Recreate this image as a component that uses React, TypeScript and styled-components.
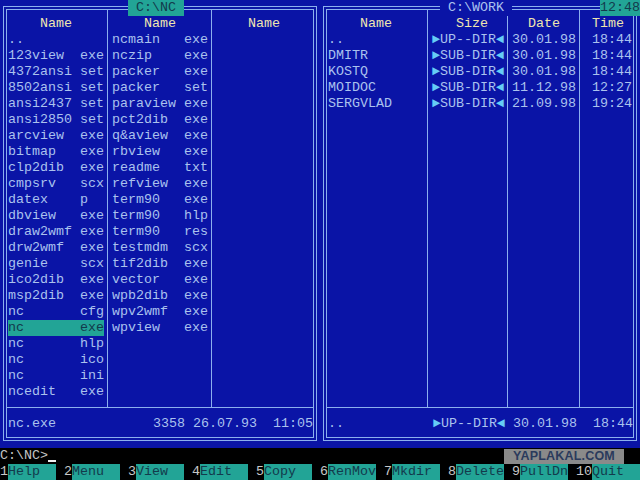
import React from 'react';
import styled, { createGlobalStyle } from 'styled-components';

const BLUE = '#0a14a6';
const LINE = '#8cb0ee';
const TEXT = '#abc2ee';
const HEAD = '#efe6b0';
const TEAL = '#22a496';
const DARK = '#133a4c';
const ARROW = '#66ccf6';

const GlobalStyle = createGlobalStyle`
  * { box-sizing: border-box; }
  html, body { margin: 0; padding: 0; background: #000; }
`;

const Screen = styled.div`
  position: relative;
  width: 640px;
  height: 480px;
  background: #000;
  font-family: 'Liberation Mono', 'Courier New', monospace;
  font-size: 13.33px;
  line-height: 16px;
  display: flex;
  flex-direction: column;
  overflow: hidden;
`;

const Panels = styled.div`
  display: flex;
  height: 448px;
`;

const PanelBox = styled.section`
  position: relative;
  width: 320px;
  height: 100%;
  padding: 6px 3px 7px;
  background: ${BLUE};
  color: ${TEXT};
`;

const Frame = styled.div`
  height: 100%;
  border: 1px solid ${LINE};
  padding: 2px;
`;

const Inner = styled.div`
  height: 100%;
  border: 1px solid ${LINE};
  display: flex;
  flex-direction: column;
`;

const Columns = styled.div<{ $cols: string }>`
  flex: 1;
  display: grid;
  grid-template-columns: ${p => p.$cols};
`;

const Column = styled.div<{ $pad: number; $last?: boolean }>`
  padding: 6px 0 0 ${p => p.$pad}px;
  border-right: ${p => (p.$last ? 'none' : `1px solid ${LINE}`)};
  white-space: pre;
  overflow: hidden;
`;

const Header = styled.div<{ $indent: number }>`
  height: 16px;
  padding-left: ${p => p.$indent * 8}px;
  color: ${HEAD};
`;

const Cell = styled.div<{ $chars: number; $right?: boolean; $selected?: boolean }>`
  width: ${p => p.$chars * 8}px;
  height: 16px;
  text-align: ${p => (p.$right ? 'right' : 'left')};
  background: ${p => (p.$selected ? TEAL : 'transparent')};
  color: ${p => (p.$selected ? DARK : 'inherit')};
`;

const Arrow = styled.span`
  color: ${ARROW};
`;

const Status = styled.div`
  height: 30px;
  border-top: 1px solid ${LINE};
  padding: 8px 0 0 1px;
  display: flex;
  justify-content: space-between;
  white-space: pre;
`;

const Title = styled.div<{ $col: number; $active?: boolean }>`
  position: absolute;
  top: 0;
  left: ${p => p.$col * 8}px;
  height: 16px;
  white-space: pre;
  background: ${p => (p.$active ? TEAL : BLUE)};
  color: ${p => (p.$active ? DARK : TEXT)};
`;

const Clock = styled.div`
  position: absolute;
  top: 0;
  right: 0;
  width: 40px;
  height: 16px;
  background: ${TEAL};
  color: ${DARK};
`;

const CommandLine = styled.div`
  height: 16px;
  color: #c4c4c4;
  white-space: pre;
  display: flex;
  align-items: flex-end;
`;

const Prompt = styled.span`
  height: 16px;
`;

const Cursor = styled.span`
  width: 8px;
  height: 2px;
  margin-bottom: 2px;
  background: #f0f0f0;
`;

const KeyBar = styled.div`
  display: flex;
  height: 16px;
`;

const Key = styled.div`
  display: flex;
  width: 64px;
`;

const KeyNum = styled.span`
  color: #c8c8c8;
`;

const KeyLabel = styled.span`
  width: 48px;
  background: ${TEAL};
  color: ${DARK};
`;

const Watermark = styled.div`
  position: absolute;
  left: 504px;
  top: 449px;
  width: 120px;
  height: 15px;
  background: #8a8a8a;
  color: #2a3a5c;
  font-family: 'Liberation Sans', Arial, sans-serif;
  font-weight: bold;
  font-size: 12.5px;
  line-height: 15px;
  text-align: center;
  letter-spacing: 0.2px;
`;

const leftCol1: [string, string][] = [
  ['..', ''],
  ['123view', 'exe'],
  ['4372ansi', 'set'],
  ['8502ansi', 'set'],
  ['ansi2437', 'set'],
  ['ansi2850', 'set'],
  ['arcview', 'exe'],
  ['bitmap', 'exe'],
  ['clp2dib', 'exe'],
  ['cmpsrv', 'scx'],
  ['datex', 'p'],
  ['dbview', 'exe'],
  ['draw2wmf', 'exe'],
  ['drw2wmf', 'exe'],
  ['genie', 'scx'],
  ['ico2dib', 'exe'],
  ['msp2dib', 'exe'],
  ['nc', 'cfg'],
  ['nc', 'exe'],
  ['nc', 'hlp'],
  ['nc', 'ico'],
  ['nc', 'ini'],
  ['ncedit', 'exe'],
];

const leftCol2: [string, string][] = [
  ['ncmain', 'exe'],
  ['nczip', 'exe'],
  ['packer', 'exe'],
  ['packer', 'set'],
  ['paraview', 'exe'],
  ['pct2dib', 'exe'],
  ['q&aview', 'exe'],
  ['rbview', 'exe'],
  ['readme', 'txt'],
  ['refview', 'exe'],
  ['term90', 'exe'],
  ['term90', 'hlp'],
  ['term90', 'res'],
  ['testmdm', 'scx'],
  ['tif2dib', 'exe'],
  ['vector', 'exe'],
  ['wpb2dib', 'exe'],
  ['wpv2wmf', 'exe'],
  ['wpview', 'exe'],
];

const dirs = [
  { name: '..', kind: 'UP--DIR', date: '30.01.98', time: '18:44' },
  { name: 'DMITR', kind: 'SUB-DIR', date: '30.01.98', time: '18:44' },
  { name: 'KOSTQ', kind: 'SUB-DIR', date: '30.01.98', time: '18:44' },
  { name: 'MOIDOC', kind: 'SUB-DIR', date: '11.12.98', time: '12:27' },
  { name: 'SERGVLAD', kind: 'SUB-DIR', date: '21.09.98', time: '19:24' },
];

const keys = ['Help', 'Menu', 'View', 'Edit', 'Copy', 'RenMov', 'Mkdir', 'Delete', 'PullDn', 'Quit'];

const fileName = (name: string, ext: string) => name.padEnd(8) + ' ' + ext.padEnd(3);

const DirMark = ({ kind }: { kind: string }) => (
  <>
    <Arrow>►</Arrow>
    {kind}
    <Arrow>◄</Arrow>
  </>
);

const BriefPanel = () => (
  <PanelBox>
    <Frame>
      <Inner>
        <Columns $cols="101px 104px 101px">
          <Column $pad={1}>
            <Header $indent={4}>Name</Header>
            {leftCol1.map(([n, e], i) => (
              <Cell key={i} $chars={12} $selected={i === 18}>
                {fileName(n, e)}
              </Cell>
            ))}
          </Column>
          <Column $pad={4}>
            <Header $indent={4}>Name</Header>
            {leftCol2.map(([n, e], i) => (
              <Cell key={i} $chars={12}>
                {fileName(n, e)}
              </Cell>
            ))}
          </Column>
          <Column $pad={4} $last>
            <Header $indent={4}>Name</Header>
          </Column>
        </Columns>
        <Status>
          <span>nc.exe</span>
          <span>3358 26.07.93  11:05</span>
        </Status>
      </Inner>
    </Frame>
    <Title $col={16} $active>
      {' C:\\NC '}
    </Title>
  </PanelBox>
);

const FullPanel = () => (
  <PanelBox>
    <Frame>
      <Inner>
        <Columns $cols="101px 80px 72px 53px">
          <Column $pad={1}>
            <Header $indent={4}>Name</Header>
            {dirs.map(d => (
              <Cell key={d.name} $chars={12}>
                {d.name}
              </Cell>
            ))}
          </Column>
          <Column $pad={4}>
            <Header $indent={3}>Size</Header>
            {dirs.map(d => (
              <Cell key={d.name} $chars={9}>
                <DirMark kind={d.kind} />
              </Cell>
            ))}
          </Column>
          <Column $pad={4}>
            <Header $indent={2}>Date</Header>
            {dirs.map(d => (
              <Cell key={d.name} $chars={8}>
                {d.date}
              </Cell>
            ))}
          </Column>
          <Column $pad={4} $last>
            <Header $indent={1}>Time</Header>
            {dirs.map(d => (
              <Cell key={d.name} $chars={6} $right>
                {d.time}
              </Cell>
            ))}
          </Column>
        </Columns>
        <Status>
          <span>..</span>
          <span>
            <DirMark kind="UP--DIR" /> 30.01.98  18:44
          </span>
        </Status>
      </Inner>
    </Frame>
    <Title $col={15}>{' C:\\WORK '}</Title>
  </PanelBox>
);

export default function App() {
  return (
    <>
      <GlobalStyle />
      <Screen>
        <Panels>
          <BriefPanel />
          <FullPanel />
        </Panels>
        <CommandLine>
          <Prompt>C:\NC&gt;</Prompt>
          <Cursor />
        </CommandLine>
        <KeyBar>
          {keys.map((k, i) => (
            <Key key={k}>
              <KeyNum>{i + 1}</KeyNum>
              <KeyLabel>{k}</KeyLabel>
            </Key>
          ))}
        </KeyBar>
        <Clock>12:48</Clock>
        <Watermark>YAPLAKAL.COM</Watermark>
      </Screen>
    </>
  );
}
